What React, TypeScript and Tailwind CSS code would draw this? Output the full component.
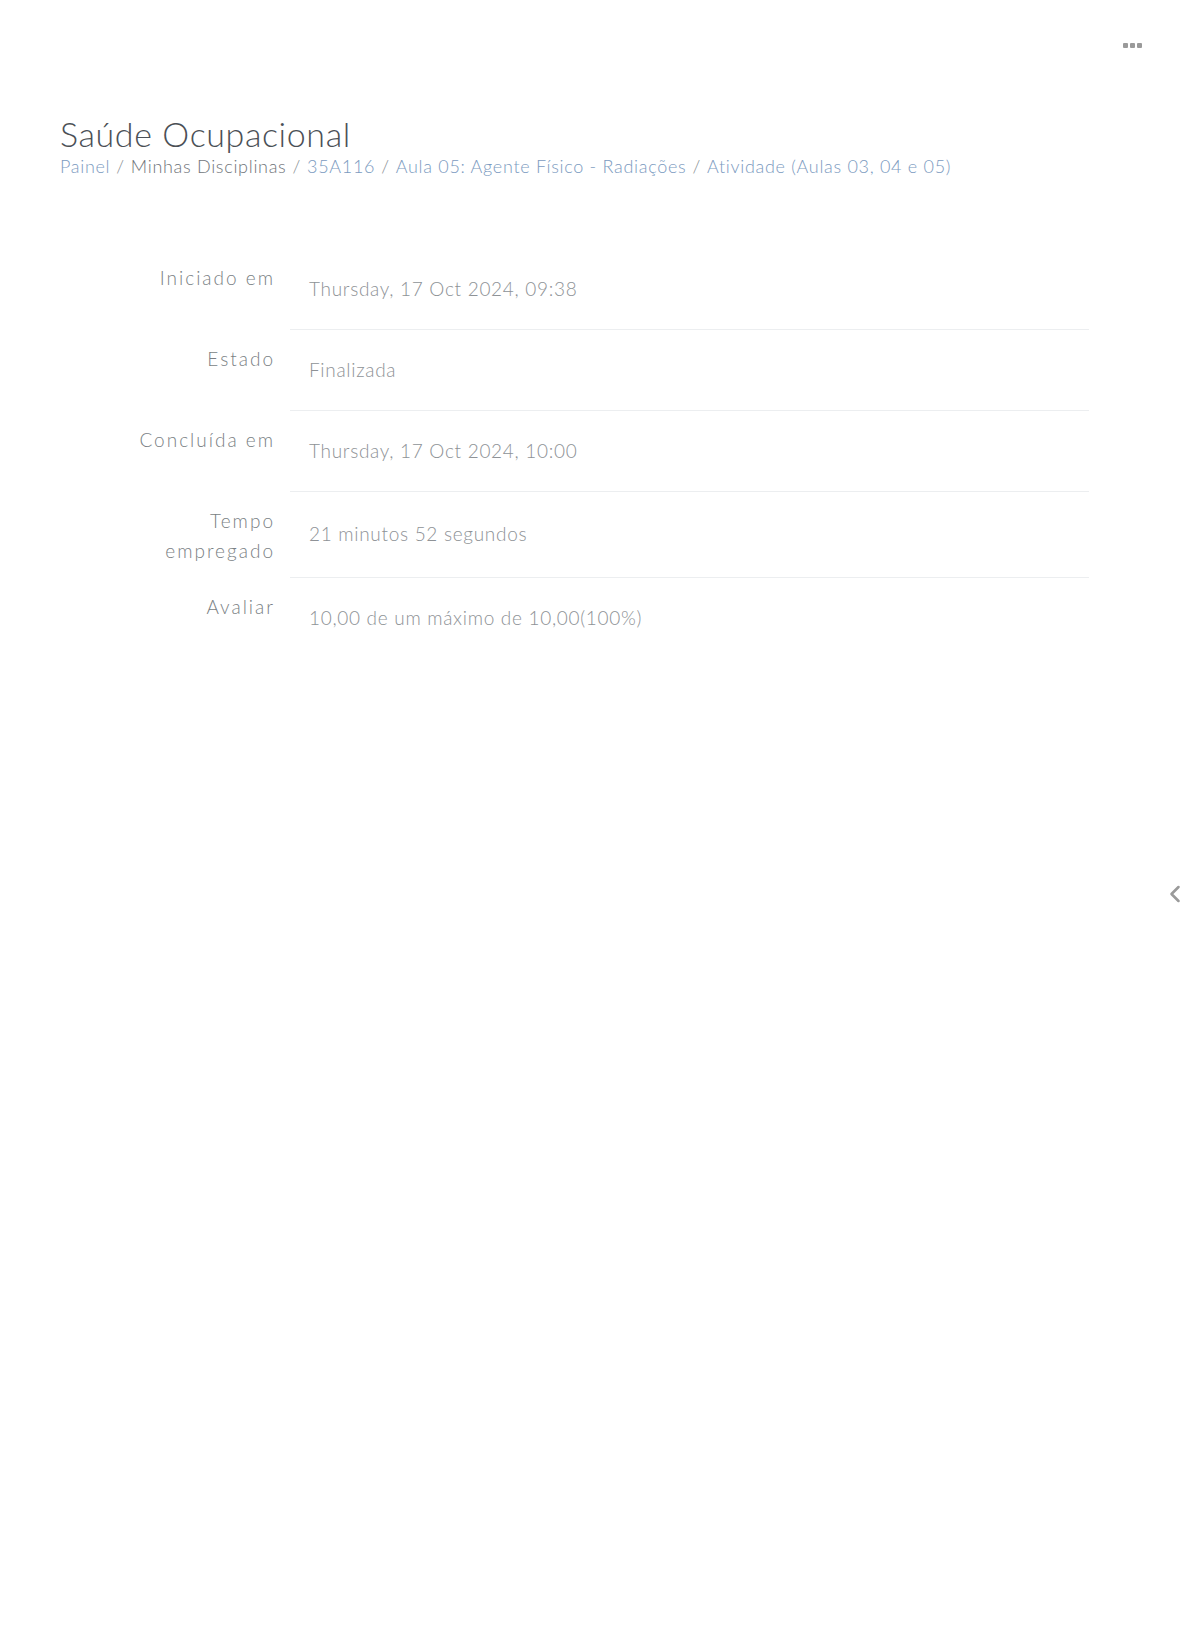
import { ChevronLeft } from "lucide-react";

const rows: { label: string[]; value: string }[] = [
  { label: ["Iniciado em"], value: "Thursday, 17 Oct 2024, 09:38" },
  { label: ["Estado"], value: "Finalizada" },
  { label: ["Concluída em"], value: "Thursday, 17 Oct 2024, 10:00" },
  { label: ["Tempo", "empregado"], value: "21 minutos 52 segundos" },
  { label: ["Avaliar"], value: "10,00 de um máximo de 10,00(100%)" },
];

function Crumbs() {
  const sep = <span className="mx-[6px] text-[#8a8f94]">/</span>;
  return (
    <div className="mt-[1px] text-[18px] leading-[24px] tracking-[0.7px]">
      <a className="text-[#7b9ac0]">Painel</a>
      {sep}
      <span className="text-[#6f7479]">Minhas Disciplinas</span>
      {sep}
      <a className="text-[#7b9ac0]">35A116</a>
      {sep}
      <a className="text-[#7b9ac0]">Aula 05: Agente Físico - Radiações</a>
      {sep}
      <a className="text-[#7b9ac0]">Atividade (Aulas 03, 04 e 05)</a>
    </div>
  );
}

export default function App() {
  return (
    <div
      className="min-h-[1627px] bg-white font-light text-[#777]"
      style={{ fontFamily: "Lato, 'Open Sans', sans-serif" }}
    >
      <header className="flex justify-end pr-[48px] pt-[43px]">
        <button className="flex gap-[2px]">
          <span className="h-[5px] w-[5px] rounded-[1px] bg-[#9a9a9a]" />
          <span className="h-[5px] w-[5px] rounded-[1px] bg-[#9a9a9a]" />
          <span className="h-[5px] w-[5px] rounded-[1px] bg-[#9a9a9a]" />
        </button>
      </header>

      <main className="px-[60px] pt-[67px]">
        <h1 className="text-[34px] leading-[38px] tracking-[0.6px] text-[#4b5056]">
          Saúde Ocupacional
        </h1>
        <Crumbs />

        <div className="mt-[71px] w-[1029px]">
          {rows.map((row, i) => (
            <div key={i} className="flex">
              <div className="w-[230px] shrink-0 pr-[15px] pt-[14px] pb-[12px] text-right text-[19px] leading-[30px] tracking-[2px] text-[#7a7f84]">
                {row.label.map((l) => (
                  <div key={l}>{l}</div>
                ))}
              </div>
              <div
                className={
                  "flex min-h-[81px] flex-1 items-center pl-[19px] text-[19px] tracking-[0.7px] text-[#8e9296] " +
                  (i < rows.length - 1 ? "border-b border-[#eceef0]" : "")
                }
              >
                {row.value}
              </div>
            </div>
          ))}
        </div>
      </main>

      <div className="absolute left-[1161px] top-[880px] text-[#9a9a9a]">
        <ChevronLeft size={28} strokeWidth={2.2} />
      </div>
    </div>
  );
}
